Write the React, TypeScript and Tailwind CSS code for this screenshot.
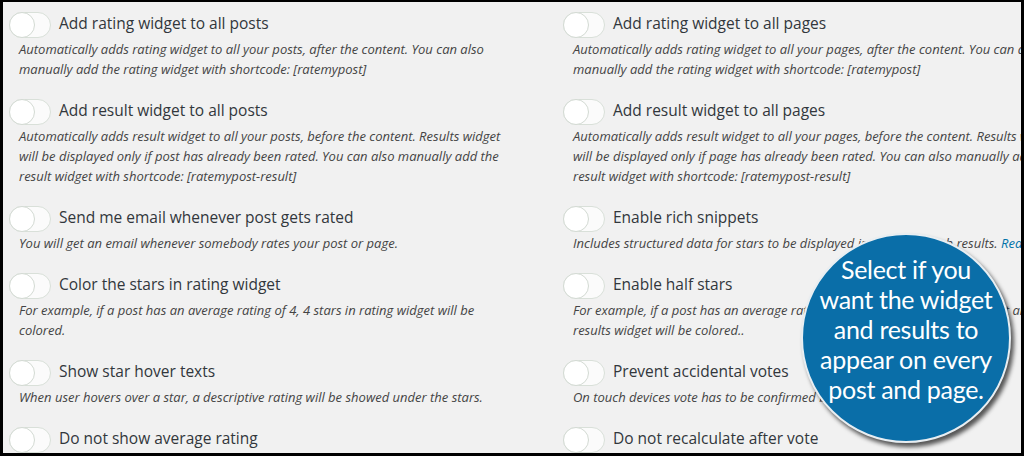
import React from "react";

type Setting = {
  title: string;
  desc: React.ReactNode;
  nowrap?: boolean;
};

const LEFT: Setting[] = [
  {
    title: "Add rating widget to all posts",
    desc: "Automatically adds rating widget to all your posts, after the content. You can also manually add the rating widget with shortcode: [ratemypost]",
  },
  {
    title: "Add result widget to all posts",
    desc: "Automatically adds result widget to all your posts, before the content. Results widget will be displayed only if post has already been rated. You can also manually add the result widget with shortcode: [ratemypost-result]",
  },
  {
    title: "Send me email whenever post gets rated",
    desc: "You will get an email whenever somebody rates your post or page.",
  },
  {
    title: "Color the stars in rating widget",
    desc: "For example, if a post has an average rating of 4, 4 stars in rating widget will be colored.",
  },
  {
    title: "Show star hover texts",
    desc: "When user hovers over a star, a descriptive rating will be showed under the stars.",
  },
  { title: "Do not show average rating", desc: "" },
];

const RIGHT: Setting[] = [
  {
    title: "Add rating widget to all pages",
    desc: "Automatically adds rating widget to all your pages, after the content. You can also manually add the rating widget with shortcode: [ratemypost]",
  },
  {
    title: "Add result widget to all pages",
    desc: "Automatically adds result widget to all your pages, before the content. Results widget will be displayed only if page has already been rated. You can also manually add the result widget with shortcode: [ratemypost-result]",
  },
  {
    title: "Enable rich snippets",
    nowrap: true,
    desc: (
      <>
        Includes structured data for stars to be displayed in Google search results.{" "}
        <span className="text-[#0073aa]">Read more</span>
      </>
    ),
  },
  {
    title: "Enable half stars",
    nowrap: true,
    desc: (
      <>
        For example, if a post has an average rating of 3.5, 3.5 stars in rating widget and
        <br />
        results widget will be colored..
      </>
    ),
  },
  {
    title: "Prevent accidental votes",
    desc: "On touch devices vote has to be confirmed by a second tap.",
  },
  { title: "Do not recalculate after vote", desc: "" },
];

function Toggle() {
  return (
    <div className="relative w-[42px] h-[26px] shrink-0 rounded-full border border-[#d9e0d9] bg-[#fbfbfb]">
      <div className="absolute -left-px -top-px w-[26px] h-[26px] rounded-full border border-[#d3dad3] bg-white" />
    </div>
  );
}

function Row({ item }: { item: Setting }) {
  return (
    <div className="mb-5">
      <div className="flex items-center gap-[8px] h-[26px]">
        <Toggle />
        <span className="text-[15.5px] text-[#32373c] leading-none -mt-[3px] whitespace-nowrap">{item.title}</span>
      </div>
      {item.desc && (
        <p
          className={`mt-px pl-[10px] w-[502px] text-[13px] leading-5 italic text-[#444] ${
            item.nowrap ? "whitespace-nowrap" : ""
          }`}
        >
          {item.desc}
        </p>
      )}
    </div>
  );
}

export default function App() {
  return (
    <div className="w-[1024px] h-[456px] bg-black pt-[2px] pl-[3px] pr-[3px] pb-[3px]">
      <div
        className="relative w-full h-full overflow-hidden bg-[#f1f1f1] grid grid-cols-[554px_1fr] pt-[10px] pl-[6px]"
        style={{ fontFamily: '"Open Sans", "Noto Sans", sans-serif' }}
      >
        <div className="flex flex-col">
          {LEFT.map(item => (
            <Row key={item.title} item={item} />
          ))}
        </div>
        <div className="flex flex-col min-w-0">
          {RIGHT.map(item => (
            <Row key={item.title} item={item} />
          ))}
        </div>

        {/* Callout bubble */}
        <div className="absolute left-[798px] top-[231px] w-[210px] h-[210px] rounded-full bg-[#0a6ea8] border-2 border-[#e8eef2] shadow-[3px_4px_4px_rgba(0,0,0,0.65)] flex items-center justify-center">
          <p
            className="-mt-[18px] text-white text-center text-[25px] leading-[30px] tracking-[-0.3px]"
            style={{ fontFamily: 'Lato, "Open Sans", sans-serif' }}
          >
            Select if you
            <br />
            want the widget
            <br />
            and results to
            <br />
            appear on every
            <br />
            post and page.
          </p>
        </div>
      </div>
    </div>
  );
}
